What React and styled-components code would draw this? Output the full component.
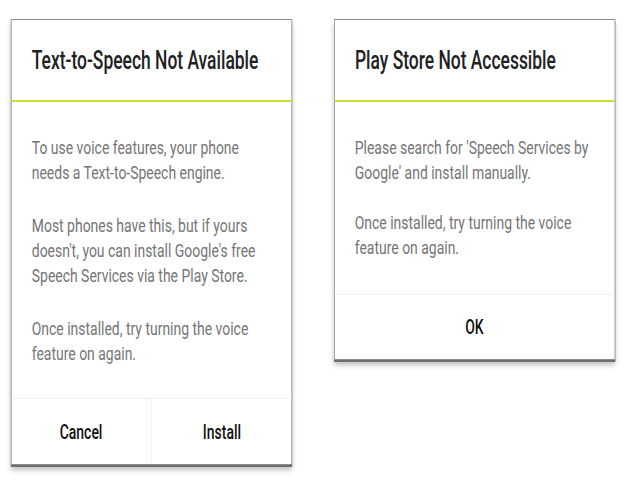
import React from 'react';
import styled, { createGlobalStyle } from 'styled-components';

const SCALE = 0.775;
const px = (v) => `${(v / SCALE).toFixed(2)}px`;

const GlobalStyle = createGlobalStyle`
  html, body {
    margin: 0;
    padding: 0;
    background: #ffffff;
    overflow: hidden;
  }
  body {
    font-family: Roboto, "Noto Sans", "Liberation Sans", sans-serif;
  }
`;

// the reference is squeezed sideways, so the whole stage is laid out wide and scaled
const Stage = styled.div`
  width: ${px(624)};
  height: 492px;
  transform: scaleX(${SCALE});
  transform-origin: 0 0;
  display: flex;
  align-items: flex-start;
  gap: ${px(42)};
  padding: 19px 0 0 ${px(11)};
  box-sizing: border-box;
`;

const Dialog = styled.div`
  width: ${px(281)};
  box-sizing: border-box;
  background: #ffffff;
  border: 1px solid #8c8c8c;
  box-shadow: 0 2px 0 #6f6f6f, 0 5px 6px rgba(0, 0, 0, 0.25);
  display: flex;
  flex-direction: column;
`;

const Header = styled.div`
  height: 80px;
  display: flex;
  align-items: center;
  padding: 0 ${px(20)};
  border-bottom: 2px solid #cddc39;
`;

// medium weight text in the shot is a touch narrower than Roboto Medium
const Narrow = styled.span`
  display: inline-block;
  white-space: nowrap;
  transform: scaleX(0.9);
  transform-origin: ${(p) => p.$origin || 'center'};
`;

const Title = styled.h2`
  margin: 0;
  font-size: 25px;
  font-weight: 500;
  color: #212121;
  white-space: nowrap;
`;

const Body = styled.div`
  display: flex;
  flex-direction: column;
  gap: ${(p) => p.$gap}px;
  padding: 33px ${px(20)} ${(p) => p.$bottom}px;
`;

const Paragraph = styled.p`
  margin: 0;
  font-size: 18px;
  line-height: 25px;
  color: #757575;
`;

const Actions = styled.div`
  display: flex;
  border-top: 1px solid #f0f0f0;
  height: ${(p) => p.$height}px;
`;

const Action = styled.button`
  flex: 1;
  border: none;
  background: transparent;
  font-family: inherit;
  font-size: 20px;
  font-weight: 500;
  color: #111111;
  padding: 0;
  cursor: pointer;

  & + & {
    border-left: 1px solid #f0f0f0;
  }
`;

const App = () => (
  <>
    <GlobalStyle />
    <Stage>
      <Dialog>
        <Header>
          <Title>
            <Narrow $origin="left">Text-to-Speech Not Available</Narrow>
          </Title>
        </Header>
        <Body $gap={28} $bottom={32}>
          <Paragraph>
            To use voice features, your phone needs a Text-to-Speech engine.
          </Paragraph>
          <Paragraph>
            Most phones have this, but if yours doesn't, you can install Google's free Speech Services via the Play Store.
          </Paragraph>
          <Paragraph>
            Once installed, try turning the voice feature on again.
          </Paragraph>
        </Body>
        <Actions $height={65}>
          <Action><Narrow>Cancel</Narrow></Action>
          <Action><Narrow>Install</Narrow></Action>
        </Actions>
      </Dialog>

      <Dialog>
        <Header>
          <Title>
            <Narrow $origin="left">Play Store Not Accessible</Narrow>
          </Title>
        </Header>
        <Body $gap={25} $bottom={34}>
          <Paragraph>
            Please search for 'Speech Services by Google' and install manually.
          </Paragraph>
          <Paragraph>
            Once installed, try turning the voice feature on again.
          </Paragraph>
        </Body>
        <Actions $height={64}>
          <Action><Narrow>OK</Narrow></Action>
        </Actions>
      </Dialog>
    </Stage>
  </>
);

export default App;
